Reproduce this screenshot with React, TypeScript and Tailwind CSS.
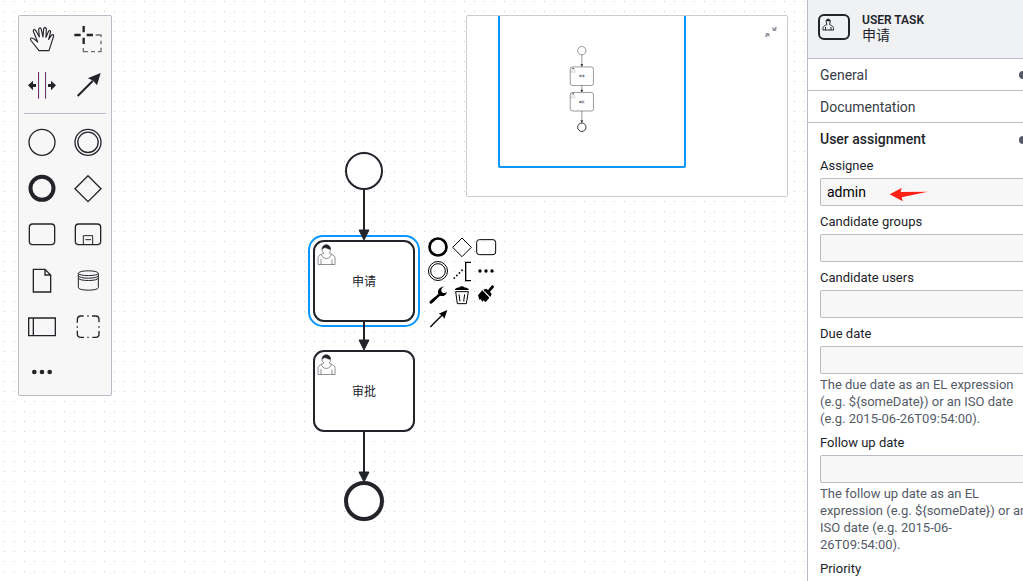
import React from "react";

const INK = "#22242a";
const BLUE = "#0a97ff";

type IconProps = { box: string; size: string; children: React.ReactNode };

function Icon({ box, size, children }: IconProps) {
  return (
    <svg viewBox={box} className={size} fill="none" stroke="currentColor" strokeWidth={4} aria-hidden="true">
      {children}
    </svg>
  );
}

type Tool = { title: string; box: string; art: React.ReactNode };

const tools: Tool[] = [
  {
    title: "Activate hand tool",
    box: "27 24 138 138",
    art: (
      <path
        strokeWidth={3.4}
        strokeLinejoin="round"
        d="M87 128 L64 99 Q59 91 64 90 Q70 89 83 102 L70 70 Q70 63 75 65 Q78 67 88 87 L86 65 Q88 57 93 61 L99 87 L101 62 Q105 56 109 62 L108 88 L116 69 Q120 65 122 71 L116 94 L124 82 Q131 77 131 84 L117 128 Z"
      />
    ),
  },
  {
    title: "Activate lasso tool",
    box: "165 24 138 138",
    art: (
      <>
        <path strokeWidth={7} d="M193 81 H212 M230 81 H249 M221 54 V73 M221 89 V108" />
        <path stroke="#6d6e72" d="M257 81 H273 V88 M273 98 V109 M273 119 V131 H264 M255 131 H243 M234 131 H220 V120" />
      </>
    ),
  },
  {
    title: "Activate create/remove space tool",
    box: "27 162 138 138",
    art: (
      <>
        <path stroke="#6b1c58" strokeWidth={3} d="M85.500 192 V272 M106.500 192 V272" />
        <path stroke="#c4e6e6" strokeWidth={2} d="M88 192 V272 M109 192 V272" />
        <path fill="currentColor" stroke="none" d="M54 232 L69 218 V228 H78 V237 H69 V247 Z M138 232 L123 218 V228 H114 V237 H123 V247 Z" />
      </>
    ),
  },
  {
    title: "Activate global connect tool",
    box: "165 162 138 138",
    art: (
      <>
        <path strokeWidth={6} d="M203 264 L248 219" />
        <path fill="currentColor" stroke="none" d="M272 195 L233 211 Q250 216 261 232 Z" />
      </>
    ),
  },
  { title: "Create start event", box: "27 27 138 138", art: <circle cx="96" cy="97" r="39" /> },
  {
    title: "Create intermediate event",
    box: "165 27 138 138",
    art: (
      <>
        <circle cx="234" cy="97" r="39" />
        <circle cx="234" cy="97" r="30.5" />
      </>
    ),
  },
  { title: "Create end event", box: "27 165 138 138", art: <circle cx="96" cy="235" r="34.5" strokeWidth={12} /> },
  { title: "Create gateway", box: "165 165 138 138", art: <path d="M234 197 L273 236 L234 275 L195 236 Z" /> },
  { title: "Create task", box: "27 303 138 138", art: <rect x="58" y="342" width="76" height="62" rx="10" /> },
  {
    title: "Create expanded sub-process",
    box: "165 303 138 138",
    art: (
      <>
        <rect x="196" y="342" width="76" height="62" rx="10" />
        <path strokeWidth={3} d="M220 403 V377 H248 V403 M226 389 H243" />
      </>
    ),
  },
  {
    title: "Create data object",
    box: "27 21 138 138",
    art: <path d="M70 58 H105 L122 75 V126 H70 Z M105 58 V75 H122" />,
  },
  {
    title: "Create data store",
    box: "165 21 138 138",
    art: (
      <path
        strokeWidth={3}
        d="M205 70 C205 60 265 60 265 70 V113 C265 123 205 123 205 113 Z C205 79 265 79 265 70 M205 77 C205 87 265 87 265 77 M205 84 C205 94 265 94 265 84"
      />
    ),
  },
  {
    title: "Create pool/participant",
    box: "27 159 138 138",
    art: <path d="M56 204 H136 V257 H56 Z M70 204 V257" />,
  },
  {
    title: "Create group",
    box: "165 159 138 138",
    art: (
      <path d="M202 218 V209 Q202 198 213 198 H221 M232 198 H236 M246 198 H257 Q267 198 267 209 V217 M267 229 V233 M267 243 V252 Q267 262 257 262 H247 M236 262 H232 M222 262 H213 Q202 262 202 252 V242 M202 233 V229" />
    ),
  },
  {
    title: "More elements",
    box: "27 297 138 138",
    art: (
      <g fill="currentColor" stroke="none">
        <circle cx="73" cy="366" r="7" />
        <circle cx="96" cy="366" r="7" />
        <circle cx="119" cy="366" r="7" />
      </g>
    ),
  },
];

const padActions: Tool[] = [
  { title: "Append end event", box: "18 15 72 72", art: <circle cx="54" cy="51" r="25.5" strokeWidth={8} /> },
  { title: "Append gateway", box: "90 15 72 72", art: <path strokeWidth={3} d="M126 24 L154 52 L126 80 L98 52 Z" /> },
  { title: "Append task", box: "162 15 72 72", art: <rect strokeWidth={3} x="170" y="29" width="57" height="45" rx="8" /> },
  {
    title: "Append intermediate event",
    box: "18 87 72 72",
    art: (
      <g strokeWidth={3}>
        <circle cx="54" cy="123" r="28.5" />
        <circle cx="54" cy="123" r="22" />
      </g>
    ),
  },
  {
    title: "Append text annotation",
    box: "90 87 72 72",
    art: (
      <>
        <path d="M153 97 H137 V152 H153" />
        <path strokeWidth={5} strokeDasharray="5 6" d="M101 146 L131 116" />
      </>
    ),
  },
  {
    title: "Append element",
    box: "162 87 72 72",
    art: (
      <g fill="currentColor" stroke="none">
        <circle cx="180" cy="123" r="5" />
        <circle cx="198" cy="123" r="5" />
        <circle cx="216" cy="123" r="5" />
      </g>
    ),
  },
  {
    title: "Change element",
    box: "18 159 72 72",
    art: (
      <path
        fill="currentColor"
        stroke="none"
        d="M73 170 C63 169 54 176 54 186 Q54 189 55 192 L29 214 Q27 219 31 221 Q35 222 37 219 L60 197 C69 201 79 196 81 185 C75 192 65 190 64 182 C63 176 67 171 73 170 Z"
      />
    ),
  },
  {
    title: "Delete",
    box: "90 159 72 72",
    art: (
      <>
        <path fill="currentColor" stroke="none" d="M105 177 Q111 172 119 172 Q119 169 125 169 Q132 169 132 172 Q140 172 146 177 V180 H105 Z" />
        <path strokeWidth={3} d="M107 185 H145 L139 221 H112 Z M117 193 L120 214 M134 193 L131 214" />
      </>
    ),
  },
  {
    title: "Set color",
    box: "162 159 72 72",
    art: (
      <path
        fill="currentColor"
        stroke="none"
        d="M190 179 L198 176 L204 180 L216 166 Q222 165 222 172 L210 185 L215 192 L211 201 Z M187 181 L208 203 L197 216 L191 211 L188 215 L182 208 L178 209 L174 196 Z"
      />
    ),
  },
  {
    title: "Connect",
    box: "18 231 72 72",
    art: (
      <>
        <path d="M31 291 L66 256" />
        <path fill="currentColor" stroke="none" d="M82 240 L56 251 Q67 254 73 266 Z" />
      </>
    ),
  },
];

function UserGlyph({ x, y }: { x: number; y: number }) {
  return (
    <g transform={`translate(${x} ${y})`} stroke={INK} strokeWidth={0.5} fill="white">
      <path d="m 15,12 c 0.909,-0.845 1.594,-2.049 1.594,-3.385 0,-2.554 -1.805,-4.622 -4.357,-4.622 -2.552,0 -4.288,2.068 -4.288,4.622 0,1.348 0.974,2.562 1.896,3.405 -0.529,0.187 -5.669,2.097 -5.794,4.756 v 6.718 h 17 v -6.718 c 0,-2.298 -5.528,-4.595 -6.051,-4.776 z m -8,6 l 0,5.5 m 11,0 l 0,-5" />
      <path d="m 15,12 m 2.162,1.009 c 0,2.447 -2.158,4.431 -4.821,4.431 -2.665,0 -4.822,-1.981 -4.822,-4.431" />
      <path
        fill={INK}
        d="m 15,12 m -6.9,-3.8 c 0,0 2.251,-2.358 4.274,-1.177 2.024,1.181 4.221,1.537 4.124,0.965 -0.098,-0.57 -0.117,-3.791 -4.191,-4.136 -3.572,0.001 -4.208,3.678 -4.207,4.348 z"
      />
    </g>
  );
}

function TaskNode({ y, label }: { y: number; label: string }) {
  return (
    <g>
      <rect x="314" y={y} width="100" height="80" rx="10" fill="white" stroke={INK} strokeWidth={2} />
      <UserGlyph x={314} y={y} />
      <text x="364" y={y + 45} textAnchor="middle" fontSize="12" fill={INK} fontFamily="'Liberation Sans', 'Noto Sans CJK SC', sans-serif">
        {label}
      </text>
    </g>
  );
}

function Flow({ from, to }: { from: number; to: number }) {
  return (
    <g stroke={INK}>
      <path d={`M364 ${from} V${to - 4}`} strokeWidth={2} />
      <path d={`M359 ${to - 10} H369 L364 ${to} Z`} fill={INK} strokeWidth={1} />
    </g>
  );
}

function Process({ selected = false }: { selected?: boolean }) {
  return (
    <g>
      <circle cx="364" cy="171" r="18" fill="white" stroke={INK} strokeWidth={2} />
      <TaskNode y={241} label="申请" />
      <TaskNode y={351} label="审批" />
      <circle cx="364" cy="501" r="18" fill="white" stroke={INK} strokeWidth={4} />
      {selected && <rect x="309" y="236" width="110" height="90" rx="14" fill="none" stroke={BLUE} strokeWidth={2} />}
      <Flow from={189} to={240} />
      <Flow from={321} to={350} />
      <Flow from={431} to={482} />
    </g>
  );
}

function Canvas() {
  return (
    <main className="relative h-full w-[calc(100vw-216px)] shrink-0 overflow-hidden bg-white text-[#22242a]">
      <svg className="absolute inset-0 h-full w-full" role="img" aria-label="Process diagram">
        <defs>
          <pattern id="dots" x="4" y="1" width="10" height="10" patternUnits="userSpaceOnUse">
            <circle cx="0.5" cy="0.5" r="0.5" fill="#b8b8b8" />
          </pattern>
        </defs>
        <rect width="100%" height="100%" fill="url(#dots)" />
        <Process selected />
      </svg>

      <div className="absolute left-[18px] top-[15px] grid w-[94px] grid-cols-2 rounded-[2px] border border-[#b9bbc6] bg-[#f7f7f7]">
        {tools.slice(0, 4).map((t) => (
          <button key={t.title} type="button" title={t.title} aria-label={t.title}>
            <Icon box={t.box} size="size-[46px]">{t.art}</Icon>
          </button>
        ))}
        <hr className="col-span-2 mx-[5px] my-[5px] border-[#b9bbc6]" />
        {tools.slice(4).map((t) => (
          <button key={t.title} type="button" title={t.title} aria-label={t.title}>
            <Icon box={t.box} size="size-[46px]">{t.art}</Icon>
          </button>
        ))}
      </div>

      <div className="absolute left-[426px] top-[235px] grid w-[72px] grid-cols-3 text-black">
        {padActions.map((t) => (
          <button key={t.title} type="button" title={t.title} aria-label={t.title}>
            <Icon box={t.box} size="size-6">{t.art}</Icon>
          </button>
        ))}
      </div>

      <div className="absolute right-[19px] top-[15px] h-[182px] w-[322px] overflow-hidden rounded-[2px] border border-[#cccccc] bg-white">
        <svg viewBox="467 16 320 180" className="h-full w-full" role="img" aria-label="Diagram overview">
          <g transform="translate(497.4 11) scale(0.232)">
            <Process />
          </g>
          <rect x="499" y="0" width="186" height="167" rx="1" fill="none" stroke={BLUE} strokeWidth={2} />
        </svg>
        <button type="button" aria-label="Close minimap" className="absolute right-[9px] top-[9px] text-[#9096a0]">
          <svg viewBox="0 0 14 14" className="size-[14px]" fill="currentColor" aria-hidden="true">
            <path d="M8 2 L9 6 H13 L11.500 4.700 L13 3 L12 1.500 L10 3.400 Z M6 12 L5 8 H1 L2.500 9.300 L1 11 L2 12.500 L4 10.600 Z" />
          </svg>
        </button>
      </div>
    </main>
  );
}

function GroupHeader({ title, marked = false, open = false }: { title: string; marked?: boolean; open?: boolean }) {
  return (
    <button
      type="button"
      aria-expanded={open}
      className={`flex h-8 w-full items-center justify-between pl-3 pr-[30px] pt-px text-left text-[14px] ${
        open ? "font-medium text-[#22242a]" : "border-b border-[#b9bbc6] text-[#393d47]"
      }`}
    >
      {title}
      {marked && <span className="size-2 rounded-full bg-[#55596a]" />}
    </button>
  );
}

type FieldProps = { id: string; label: string; value?: string; hint?: string[] };

function Field({ id, label, value = "", hint }: FieldProps) {
  return (
    <div className="flex flex-col">
      <label htmlFor={id} className="mb-1 text-[13px] leading-4">{label}</label>
      <input
        id={id}
        type="text"
        defaultValue={value}
        className="h-7 w-full rounded-[2px] border border-[#b9bbc6] bg-[#f7f7f7] px-[6px] text-[14px] text-black outline-none"
      />
      {hint && (
        <p className="mt-[2px] whitespace-nowrap text-[13px] leading-[17px] text-[#555b68]">
          {hint.map((line) => (
            <span key={line} className="block">{line}</span>
          ))}
        </p>
      )}
    </div>
  );
}

function PropertiesPanel() {
  return (
    <aside className="h-full w-[250px] shrink-0 overflow-hidden border-l border-[#b9bbc6] bg-white text-[#22242a]">
      <header className="flex h-[59px] items-start gap-3 border-b border-[#b9bbc6] bg-[#f0f1f3] pl-[10px] pt-3">
        <svg viewBox="0 0 32 28" className="mt-px h-7 w-8" fill="none" stroke="currentColor" aria-hidden="true">
          <rect x="1" y="2" width="30" height="24" rx="5" strokeWidth={2} />
          <path d="M8.500 10 C6.500 5 13.500 5 12 10 L11.500 11.500 C13.500 12.500 16 13 15.500 17 H5 C4.500 13 7 12.500 9 11.500 Z M7.500 14 V17 M13 14 V17" strokeWidth={1} />
          <path d="M8 8 Q10 4 12.500 8 Z" fill="currentColor" strokeWidth={0.5} />
        </svg>
        <div>
          <div className="text-[12px] font-semibold leading-4">USER TASK</div>
          <div className="text-[14px] leading-[14px]">申请</div>
        </div>
      </header>
      <GroupHeader title="General" marked />
      <GroupHeader title="Documentation" />
      <section>
        <GroupHeader title="User assignment" marked open />
        <div className="flex flex-col gap-2 px-3 pt-[3px]">
          <div className="relative">
            <Field id="assignee" label="Assignee" value="admin" />
            <svg viewBox="0 0 120 48" className="absolute left-[69px] top-[28px] h-4 w-10" fill="#ff1f14" aria-hidden="true">
              <path d="M2 25 L38 6 L35 18 L116 17 L38 34 L41 46 Z" />
            </svg>
          </div>
          <Field id="groups" label="Candidate groups" />
          <Field id="users" label="Candidate users" />
          <Field
            id="due"
            label="Due date"
            hint={["The due date as an EL expression", "(e.g. ${someDate}) or an ISO date", "(e.g. 2015-06-26T09:54:00)."]}
          />
          <Field
            id="follow"
            label="Follow up date"
            hint={["The follow up date as an EL", "expression (e.g. ${someDate}) or an", "ISO date (e.g. 2015-06-", "26T09:54:00)."]}
          />
          <Field id="priority" label="Priority" />
        </div>
      </section>
    </aside>
  );
}

export default function App() {
  return (
    <div className="flex h-screen overflow-hidden font-[Roboto,'Noto_Sans_CJK_SC',sans-serif]">
      <Canvas />
      <PropertiesPanel />
    </div>
  );
}
